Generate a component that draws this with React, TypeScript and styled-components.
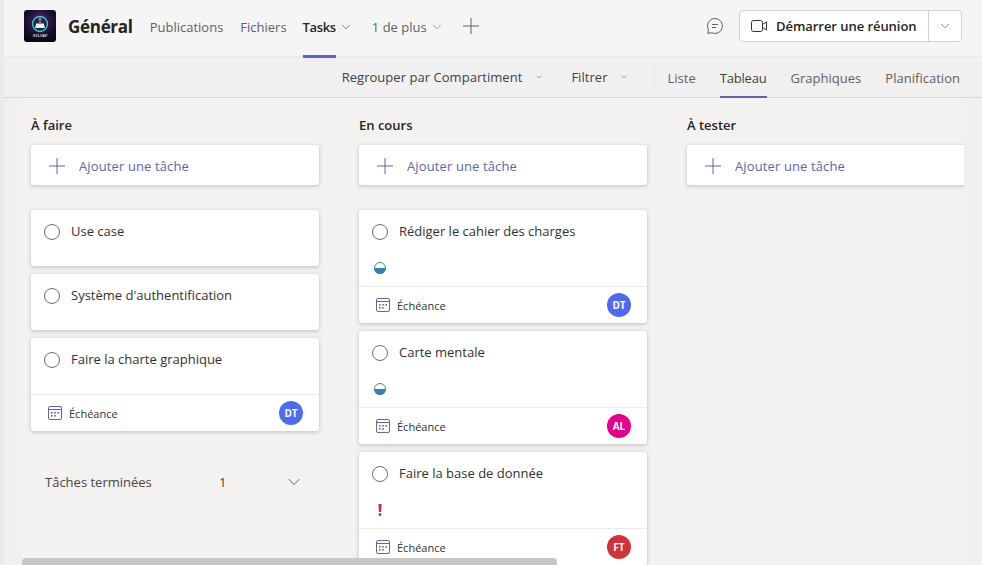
import React from "react";
import styled, { createGlobalStyle } from "styled-components";
import { ChevronDown } from "lucide-react";

const Global = createGlobalStyle`
  html, body { margin: 0; padding: 0; width: 982px; height: 565px; overflow: hidden; }
  body { font-family: "Open Sans", "Noto Sans", "Liberation Sans", sans-serif; color: #252423; }
  * { box-sizing: border-box; }
`;

const Page = styled.div`
  display: flex;
  width: 982px;
  height: 565px;
  background: #ebebeb;
`;
const Main = styled.div`
  flex: 1;
  min-width: 0;
  margin-left: 4px;
  display: flex;
  flex-direction: column;
`;
const Header = styled.header`
  height: 57px;
  flex: none;
  display: flex;
  align-items: center;
  padding: 0 20px;
  background: #f5f5f5;
  border-bottom: 1px solid #e9e9e9;
`;
const LogoBox = styled.div`
  width: 32px;
  height: 32px;
  margin-top: -4px;
  border-radius: 3px;
  overflow: hidden;
  flex: none;
`;
const ChannelName = styled.h1`
  margin: -3px 0 0 12px;
  font-size: 17px;
  line-height: 24px;
  font-weight: 700;
  letter-spacing: -0.3px;
  color: #252423;
`;
const HeaderTabs = styled.nav`
  display: flex;
  align-items: stretch;
  height: 56px;
  margin-left: 17px;
`;
const HeaderTab = styled.div<{ $active?: boolean; $gap?: number }>`
  display: flex;
  align-items: center;
  gap: 3px;
  height: 56px;
  margin-right: ${(p) => p.$gap ?? 16}px;
  padding-bottom: 3px;
  font-size: 13px;
  color: ${(p) => (p.$active ? "#252423" : "#616161")};
  font-weight: ${(p) => (p.$active ? 600 : 400)};
  letter-spacing: ${(p) => (p.$active ? "-0.35px" : "0")};
`;
const TabLabel = styled.span<{ $active?: boolean }>`
  position: relative;
  display: flex;
  align-items: center;
  height: 56px;
  &::after {
    content: "";
    display: ${(p) => (p.$active ? "block" : "none")};
    position: absolute;
    left: 0;
    right: 0;
    bottom: -3px;
    height: 3px;
    background: #5b5fc7;
  }
`;
const AddTab = styled.div`
  display: flex;
  align-items: center;
  margin-left: 3px;
  margin-top: -4px;
  color: #616161;
`;
const HeaderRight = styled.div`
  margin-left: auto;
  display: flex;
  align-items: center;
  gap: 15px;
  margin-top: -4px;
`;
const MeetButton = styled.div`
  display: flex;
  align-items: stretch;
  width: 223px;
  height: 32px;
  background: #fff;
  border: 1px solid #d1d1d1;
  border-radius: 4px;
`;
const MeetMain = styled.div`
  flex: 1;
  display: flex;
  align-items: center;
  gap: 8px;
  padding-left: 11px;
  font-size: 13px;
  font-weight: 600;
  letter-spacing: -0.05px;
  color: #242424;
  border-right: 1px solid #d1d1d1;
`;
const MeetCaret = styled.div`
  width: 32px;
  flex: none;
  display: flex;
  align-items: center;
  justify-content: center;
  color: #484644;
`;
const SubBar = styled.div`
  height: 41px;
  flex: none;
  display: flex;
  justify-content: flex-end;
  align-items: stretch;
  padding-right: 22px;
  background: #f0f0f0;
  border-bottom: 1px solid #d6d6d6;
`;
const FilterItem = styled.div<{ $gap: number; $end: number }>`
  display: flex;
  align-items: center;
  gap: ${(p) => p.$gap}px;
  margin-right: ${(p) => p.$end}px;
  padding-bottom: 1px;
  font-size: 13px;
  letter-spacing: 0.04px;
  color: #424242;
`;
const SubDivider = styled.div`
  width: 1px;
  height: 22px;
  margin: 9px 13px 0 0;
  background: #e6e6e6;
`;
const ViewTabs = styled.div`
  display: flex;
  gap: 24px;
`;
const ViewTab = styled.div<{ $active?: boolean }>`
  display: flex;
  align-items: center;
  padding-top: 2px;
  font-size: 13px;
  letter-spacing: ${(p) => (p.$active ? "-0.2px" : "0.02px")};
  color: ${(p) => (p.$active ? "#424242" : "#616161")};
  border-bottom: 2px solid ${(p) => (p.$active ? "#6264a7" : "transparent")};
  margin-bottom: -1px;
`;
const BoardArea = styled.div`
  flex: 1;
  min-height: 0;
  display: flex;
  background: #f0f0f0;
`;
const BoardViewport = styled.div`
  position: relative;
  margin-left: 18px;
  width: 942px;
  height: 100%;
  overflow: hidden;
  background: #f3f2f1;
`;
const Columns = styled.div`
  display: flex;
  gap: 40px;
  padding-left: 9px;
  width: 1400px;
`;
const Column = styled.section`
  width: 288px;
  flex: none;
  display: flex;
  flex-direction: column;
`;
const ColumnTitle = styled.h2`
  margin: 0;
  height: 47px;
  padding-top: 18px;
  font-size: 13px;
  line-height: 18px;
  font-weight: 600;
  color: #252423;
`;
const AddCard = styled.div`
  height: 40px;
  display: flex;
  align-items: center;
  gap: 14px;
  padding: 1px 0 0 18px;
  margin-bottom: 25px;
  background: #fff;
  border-radius: 3px;
  box-shadow: 0 1px 4px rgba(0, 0, 0, 0.22);
  color: #6264a7;
  font-size: 13px;
  letter-spacing: 0.12px;
`;
const TaskCard = styled.article`
  flex: none;
  margin-bottom: 8px;
  background: #fff;
  border-radius: 3px;
  box-shadow: 0 1px 4px rgba(0, 0, 0, 0.22);
`;
const TaskTop = styled.div`
  display: flex;
  align-items: flex-start;
  gap: 11px;
  height: 56px;
  padding: 12px 13px 0;
  font-size: 13px;
  line-height: 18px;
  color: #323130;
`;
const Radio = styled.span`
  width: 16px;
  height: 16px;
  margin-top: 2px;
  flex: none;
  border: 1.4px solid #6f6e6d;
  border-radius: 50%;
`;
const StatusRow = styled.div`
  height: 24px;
  padding-left: 15px;
  margin-top: -4px;
  display: flex;
  align-items: flex-start;
`;
const TaskFooter = styled.div`
  height: 37px;
  display: flex;
  align-items: center;
  justify-content: space-between;
  padding: 0 16px 0 17px;
  border-top: 1px solid #edebe9;
`;
const DueDate = styled.div`
  display: flex;
  align-items: center;
  gap: 7px;
  font-size: 11px;
  color: #323130;
`;
const Avatar = styled.div<{ $bg: string }>`
  width: 24px;
  height: 24px;
  border-radius: 50%;
  background: ${(p) => p.$bg};
  color: #fff;
  font-size: 10px;
  font-weight: 700;
  display: flex;
  align-items: center;
  justify-content: center;
`;
const DoneRow = styled.div`
  display: grid;
  grid-template-columns: 174px 1fr auto;
  align-items: center;
  height: 20px;
  margin-top: 33px;
  padding: 0 15px 0 14px;
  font-size: 13px;
  color: #484644;
`;
const ScrollThumb = styled.div`
  position: absolute;
  left: 0;
  bottom: 0;
  width: 535px;
  height: 7px;
  background: #c8c6c4;
  border-radius: 4px 4px 0 0;
`;

const Logo = () => (
  <svg width="32" height="32" viewBox="0 0 32 32">
    <defs>
      <radialGradient id="lg" cx="50%" cy="35%" r="70%">
        <stop offset="0%" stopColor="#4a2a7a" />
        <stop offset="60%" stopColor="#1c1030" />
        <stop offset="100%" stopColor="#08060f" />
      </radialGradient>
    </defs>
    <rect width="32" height="32" fill="url(#lg)" />
    <circle cx="16" cy="14" r="7.5" fill="#182a44" stroke="#45c4cc" strokeWidth="1.3" />
    <rect x="15.4" y="8" width="1.2" height="5" fill="#c79ad6" />
    <circle cx="16" cy="9" r="1.5" fill="#d24fb0" />
    <path d="M11 18l1.200-4.500h7.600L21 18z" fill="#eef0f5" />
    <text x="16" y="27" textAnchor="middle" fontSize="3.8" fontWeight="700" fill="#d8d8d8" fontFamily="Liberation Sans, sans-serif">SYLVAF</text>
  </svg>
);

const PlusGlyph = () => (
  <svg width="16" height="16" viewBox="0 0 16 16" fill="none" stroke="currentColor" strokeWidth="1">
    <path d="M8 0v16M0 8h16" />
  </svg>
);

const ChatIcon = () => (
  <svg width="18" height="18" viewBox="0 0 18 18" fill="none" stroke="#5f5f5f" strokeWidth="1">
    <path d="M9 1.500a7.500 7.500 0 1 1-3.400 14.200L1.600 16.400l.9-3.700A7.500 7.500 0 0 1 9 1.500z" />
    <path d="M6 7.500h6M6 10.500h4" />
  </svg>
);

const CameraIcon = () => (
  <svg width="17" height="14" viewBox="0 0 17 14" fill="none" stroke="#333" strokeWidth="1">
    <rect x="0.5" y="1.500" width="11" height="11" rx="2" />
    <path d="M11.500 5.500l4-2.500v8l-4-2.500" />
  </svg>
);

const CalendarIcon = () => (
  <svg width="14" height="14" viewBox="0 0 14 14" fill="none">
    <rect x="0.5" y="0.5" width="13" height="13" rx="1.500" stroke="#6264a7" />
    <path d="M1 3.500h12" stroke="#6264a7" />
    <rect x="3" y="6" width="1.600" height="1.600" fill="#6264a7" />
    <rect x="6.200" y="6" width="1.600" height="1.600" fill="#6264a7" />
    <rect x="9.400" y="6" width="1.600" height="1.600" fill="#6264a7" />
    <rect x="3" y="9" width="1.600" height="1.600" fill="#6264a7" />
    <rect x="6.200" y="9" width="1.600" height="1.600" fill="#6264a7" />
  </svg>
);

const HalfCircle = () => (
  <svg width="12" height="12" viewBox="0 0 12 12">
    <circle cx="6" cy="6" r="5.500" fill="#fff" stroke="#3a83ad" />
    <path d="M0 6h12a6 6 0 0 1-12 0z" fill="#3a83ad" />
  </svg>
);

const Urgent = () => (
  <svg width="12" height="12" viewBox="0 0 12 12">
    <path d="M4.400 0h3.200l-.5 8H4.900z" fill="#c4314b" />
    <circle cx="6" cy="10.400" r="1.500" fill="#c4314b" />
  </svg>
);

type Task = { title: string; status?: "half" | "urgent"; who?: string; color?: string };

const TaskItem = ({ title, status, who, color }: Task) => (
  <TaskCard>
    <TaskTop>
      <Radio />
      <span>{title}</span>
    </TaskTop>
    {status && (
      <StatusRow>{status === "half" ? <HalfCircle /> : <Urgent />}</StatusRow>
    )}
    {who && (
      <TaskFooter>
        <DueDate>
          <CalendarIcon />
          Échéance
        </DueDate>
        <Avatar $bg={color!}>{who}</Avatar>
      </TaskFooter>
    )}
  </TaskCard>
);

const AddTask = () => (
  <AddCard>
    <PlusGlyph />
    Ajouter une tâche
  </AddCard>
);

const columns: { title: string; tasks: Task[]; done?: boolean }[] = [
  {
    title: "À faire",
    done: true,
    tasks: [
      { title: "Use case" },
      { title: "Système d'authentification" },
      { title: "Faire la charte graphique", who: "DT", color: "#4f6bed" },
    ],
  },
  {
    title: "En cours",
    tasks: [
      { title: "Rédiger le cahier des charges", status: "half", who: "DT", color: "#4f6bed" },
      { title: "Carte mentale", status: "half", who: "AL", color: "#e3008c" },
      { title: "Faire la base de donnée", status: "urgent", who: "FT", color: "#d13438" },
    ],
  },
  { title: "À tester", tasks: [] },
];

export default function App() {
  return (
    <Page>
      <Global />
      <Main>
        <Header>
          <LogoBox>
            <Logo />
          </LogoBox>
          <ChannelName>Général</ChannelName>
          <HeaderTabs>
            <HeaderTab $gap={17}>
              <TabLabel>Publications</TabLabel>
            </HeaderTab>
            <HeaderTab>
              <TabLabel>Fichiers</TabLabel>
            </HeaderTab>
            <HeaderTab $active $gap={19}>
              <TabLabel $active>Tasks</TabLabel>
              <ChevronDown size={14} strokeWidth={1} />
            </HeaderTab>
            <HeaderTab $gap={16}>
              <TabLabel>1 de plus</TabLabel>
              <ChevronDown size={14} strokeWidth={1} />
            </HeaderTab>
            <AddTab>
              <PlusGlyph />
            </AddTab>
          </HeaderTabs>
          <HeaderRight>
            <ChatIcon />
            <MeetButton>
              <MeetMain>
                <CameraIcon />
                Démarrer une réunion
              </MeetMain>
              <MeetCaret>
                <ChevronDown size={14} strokeWidth={1.1} />
              </MeetCaret>
            </MeetButton>
          </HeaderRight>
        </Header>
        <SubBar>
          <FilterItem $gap={13} $end={28}>
            Regrouper par Compartiment
            <ChevronDown size={8} strokeWidth={1.4} />
          </FilterItem>
          <FilterItem $gap={12} $end={26}>
            Filtrer
            <ChevronDown size={8} strokeWidth={1.4} />
          </FilterItem>
          <SubDivider />
          <ViewTabs>
            <ViewTab>Liste</ViewTab>
            <ViewTab $active>Tableau</ViewTab>
            <ViewTab>Graphiques</ViewTab>
            <ViewTab>Planification</ViewTab>
          </ViewTabs>
        </SubBar>
        <BoardArea>
          <BoardViewport>
            <Columns>
              {columns.map((c) => (
                <Column key={c.title}>
                  <ColumnTitle>{c.title}</ColumnTitle>
                  <AddTask />
                  {c.tasks.map((t) => (
                    <TaskItem key={t.title} {...t} />
                  ))}
                  {c.done && (
                    <DoneRow>
                      <span>Tâches terminées</span>
                      <span>1</span>
                      <ChevronDown size={20} strokeWidth={1} />
                    </DoneRow>
                  )}
                </Column>
              ))}
            </Columns>
            <ScrollThumb />
          </BoardViewport>
        </BoardArea>
      </Main>
    </Page>
  );
}
